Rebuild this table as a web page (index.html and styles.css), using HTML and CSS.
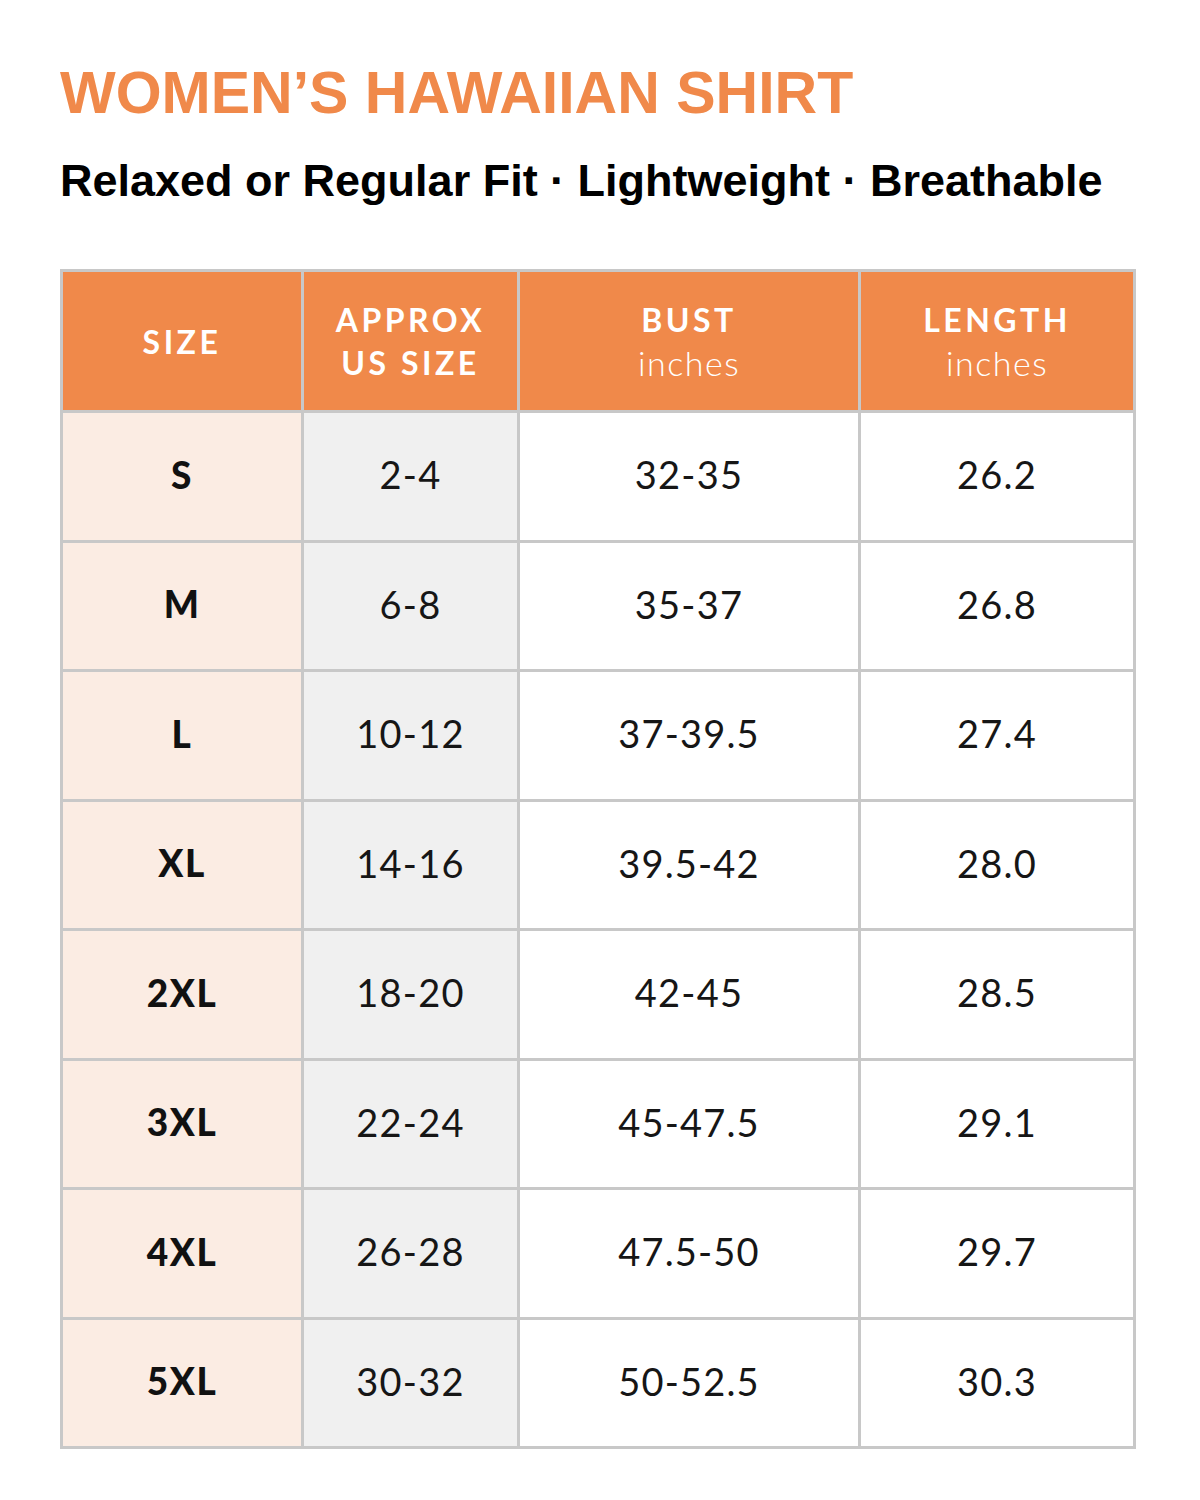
FILE: index.html
```html
<!DOCTYPE html>
<html>
<head>
<meta charset="utf-8">
<link rel="stylesheet" href="styles.css">
</head>
<body>
<div class="page">
  <h1 class="title">WOMEN’S HAWAIIAN SHIRT</h1>
  <p class="subtitle">Relaxed or Regular Fit · Lightweight · Breathable</p>
  <table class="chart">
    <colgroup>
      <col class="c1"><col class="c2"><col class="c3"><col class="c4">
    </colgroup>
    <thead>
      <tr>
        <th>SIZE</th>
        <th>APPROX<br>US SIZE</th>
        <th>BUST<br><span class="unit">inches</span></th>
        <th>LENGTH<br><span class="unit">inches</span></th>
      </tr>
    </thead>
    <tbody>
      <tr><td class="size">S</td><td class="us">2-4</td><td>32-35</td><td>26.2</td></tr>
      <tr><td class="size">M</td><td class="us">6-8</td><td>35-37</td><td>26.8</td></tr>
      <tr><td class="size">L</td><td class="us">10-12</td><td>37-39.5</td><td>27.4</td></tr>
      <tr><td class="size">XL</td><td class="us">14-16</td><td>39.5-42</td><td>28.0</td></tr>
      <tr><td class="size">2XL</td><td class="us">18-20</td><td>42-45</td><td>28.5</td></tr>
      <tr><td class="size">3XL</td><td class="us">22-24</td><td>45-47.5</td><td>29.1</td></tr>
      <tr><td class="size">4XL</td><td class="us">26-28</td><td>47.5-50</td><td>29.7</td></tr>
      <tr><td class="size">5XL</td><td class="us">30-32</td><td>50-52.5</td><td>30.3</td></tr>
    </tbody>
  </table>
</div>
</body>
</html>
```
FILE: styles.css
```css
html, body {
  margin: 0;
  padding: 0;
  background: #ffffff;
}
.page {
  padding: 58px 0 0 60px;
}
.title {
  margin: 0;
  font-family: "Liberation Sans", Arial, sans-serif;
  font-weight: bold;
  font-size: 59px;
  line-height: 70px;
  color: #f0894a;
  letter-spacing: 0;
}
.subtitle {
  margin: 27px 0 0 0;
  font-family: "Liberation Sans", Arial, sans-serif;
  font-weight: bold;
  font-size: 45px;
  line-height: 52px;
  color: #000;
}
.chart {
  margin-top: 62px;
  border-collapse: collapse;
  width: 1073px;
  font-family: Lato, "Open Sans", sans-serif;
  table-layout: fixed;
}
.c1 { width: 241px; }
.c2 { width: 216px; }
.c3 { width: 341px; }
.c4 { width: 275px; }
.chart th, .chart td {
  border: 3px solid #c8c8c8;
  text-align: center;
  vertical-align: middle;
  padding: 0;
}
.chart th {
  background: #f0894a;
  color: #ffffff;
  font-weight: bold;
  font-size: 32px;
  letter-spacing: 3.5px;
  line-height: 43px;
  height: 138px;
}
.chart th .unit {
  font-weight: 300;
  font-size: 34px;
  letter-spacing: 1.5px;
}
.chart td {
  height: 122.5px;
  padding-bottom: 4px;
  font-size: 38px;
  color: #161616;
  background: #ffffff;
  letter-spacing: 1.2px;
}
.chart td.size {
  background: #fbece3;
  font-weight: 900;
  font-size: 37px;
  letter-spacing: 1.5px;
  color: #111;
}
.chart td.us {
  background: #f0f0f0;
}
```
